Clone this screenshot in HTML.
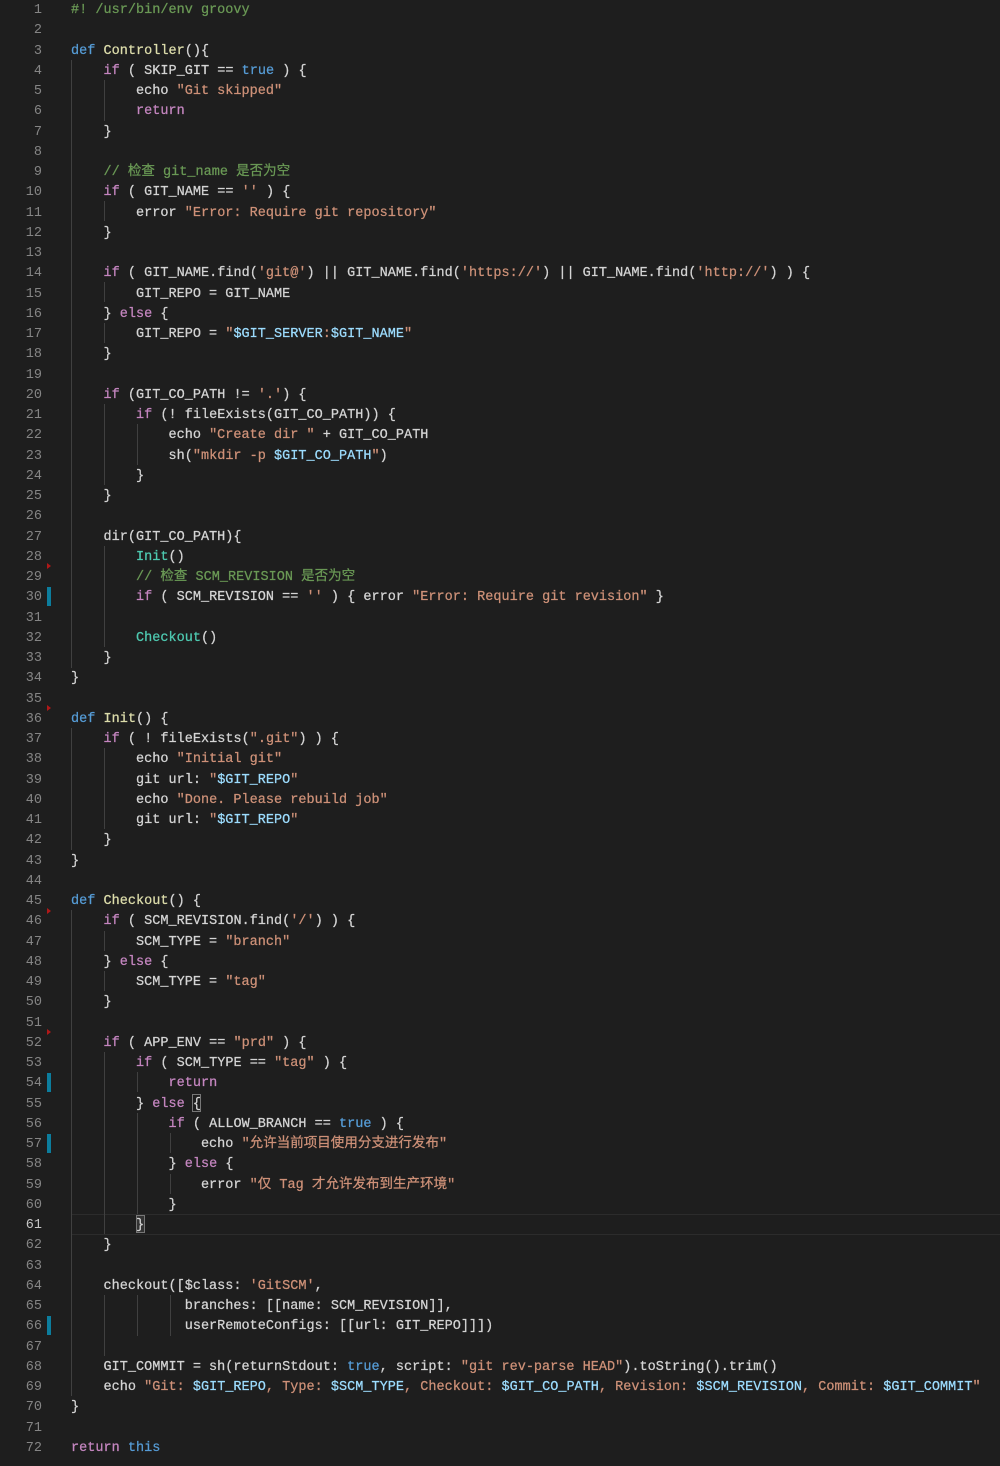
<!DOCTYPE html>
<html><head><meta charset="utf-8"><style>
body{margin:0;background:#1e1e1e;width:1000px;height:1466px;overflow:hidden;position:relative}
pre{margin:0;position:absolute;left:71px;top:1px;font:13.5px/20.25px "Liberation Mono","Noto Sans CJK SC",monospace;color:#d4d4d4;letter-spacing:0.02px;-webkit-text-stroke:0.25px}
#ln{position:absolute;left:0;top:1px;width:42px;text-align:right;font:13.5px/20.25px "Liberation Mono",monospace;color:#858585}
.k{color:#c586c0}.d{color:#569cd6}.s{color:#ce9178}.c{color:#6a9955}.f{color:#dcdcaa}.t{color:#4ec9b0}.v{color:#9cdcfe}
.g{position:absolute;width:1px;background:#404040}
.m{position:absolute;left:47px;width:4px;height:19px;background:#0c7d9d}
.r{position:absolute;left:47px;width:0;height:0;border-top:3px solid transparent;border-bottom:3px solid transparent;border-left:4px solid #b01818}
</style></head><body>
<div style="position:absolute;left:71px;right:0;top:1214px;height:19px;border-top:1px solid #2c2c2c;border-bottom:1px solid #2c2c2c"></div>
<div style="position:absolute;left:136px;top:1215px;width:9px;height:18px;border:1px solid #777;box-sizing:border-box;background:#333"></div>
<div style="position:absolute;left:192px;top:1094px;width:9px;height:18px;border:1px solid #777;box-sizing:border-box"></div>
<div class="g" style="left:71px;top:60px;height:608px"></div>
<div class="g" style="left:71px;top:728px;height:122px"></div>
<div class="g" style="left:71px;top:910px;height:486px"></div>
<div class="g" style="left:104px;top:80px;height:41px"></div>
<div class="g" style="left:104px;top:201px;height:20px"></div>
<div class="g" style="left:104px;top:282px;height:20px"></div>
<div class="g" style="left:104px;top:323px;height:20px"></div>
<div class="g" style="left:104px;top:404px;height:81px"></div>
<div class="g" style="left:104px;top:546px;height:101px"></div>
<div class="g" style="left:104px;top:748px;height:81px"></div>
<div class="g" style="left:104px;top:931px;height:20px"></div>
<div class="g" style="left:104px;top:971px;height:20px"></div>
<div class="g" style="left:104px;top:1052px;height:182px"></div>
<div class="g" style="left:104px;top:1295px;height:61px"></div>
<div class="g" style="left:137px;top:424px;height:41px"></div>
<div class="g" style="left:137px;top:1072px;height:20px"></div>
<div class="g" style="left:137px;top:1113px;height:101px"></div>
<div class="g" style="left:137px;top:1295px;height:41px"></div>
<div class="g" style="left:170px;top:1133px;height:20px"></div>
<div class="g" style="left:170px;top:1174px;height:20px"></div>
<div class="g" style="left:170px;top:1295px;height:41px"></div>
<div class="m" style="top:587px"></div><div class="m" style="top:1073px"></div><div class="m" style="top:1134px"></div><div class="m" style="top:1316px"></div>
<div class="r" style="top:563px"></div><div class="r" style="top:705px"></div><div class="r" style="top:908px"></div><div class="r" style="top:1029px"></div>
<div id="ln">1<br>2<br>3<br>4<br>5<br>6<br>7<br>8<br>9<br>10<br>11<br>12<br>13<br>14<br>15<br>16<br>17<br>18<br>19<br>20<br>21<br>22<br>23<br>24<br>25<br>26<br>27<br>28<br>29<br>30<br>31<br>32<br>33<br>34<br>35<br>36<br>37<br>38<br>39<br>40<br>41<br>42<br>43<br>44<br>45<br>46<br>47<br>48<br>49<br>50<br>51<br>52<br>53<br>54<br>55<br>56<br>57<br>58<br>59<br>60<br><span style="color:#c6c6c6">61</span><br>62<br>63<br>64<br>65<br>66<br>67<br>68<br>69<br>70<br>71<br>72</div>
<pre><span class="c">#! /usr/bin/env groovy</span>

<span class="d">def</span> <span class="f">Controller</span>(){
    <span class="k">if</span> ( SKIP_GIT == <span class="d">true</span> ) {
        echo <span class="s">"Git skipped"</span>
        <span class="k">return</span>
    }

    <span class="c">// 检查 git_name 是否为空</span>
    <span class="k">if</span> ( GIT_NAME == <span class="s">''</span> ) {
        error <span class="s">"Error: Require git repository"</span>
    }

    <span class="k">if</span> ( GIT_NAME.find(<span class="s">'git@'</span>) || GIT_NAME.find(<span class="s">'https://'</span>) || GIT_NAME.find(<span class="s">'http://'</span>) ) {
        GIT_REPO = GIT_NAME
    } <span class="k">else</span> {
        GIT_REPO = <span class="s">"</span><span class="v">$GIT_SERVER</span><span class="s">:</span><span class="v">$GIT_NAME</span><span class="s">"</span>
    }

    <span class="k">if</span> (GIT_CO_PATH != <span class="s">'.'</span>) {
        <span class="k">if</span> (! fileExists(GIT_CO_PATH)) {
            echo <span class="s">"Create dir "</span> + GIT_CO_PATH
            sh(<span class="s">"mkdir -p </span><span class="v">$GIT_CO_PATH</span><span class="s">"</span>)
        }
    }

    dir(GIT_CO_PATH){
        <span class="t">Init</span>()
        <span class="c">// 检查 SCM_REVISION 是否为空</span>
        <span class="k">if</span> ( SCM_REVISION == <span class="s">''</span> ) { error <span class="s">"Error: Require git revision"</span> }

        <span class="t">Checkout</span>()
    }
}

<span class="d">def</span> <span class="f">Init</span>() {
    <span class="k">if</span> ( ! fileExists(<span class="s">".git"</span>) ) {
        echo <span class="s">"Initial git"</span>
        git url: <span class="s">"</span><span class="v">$GIT_REPO</span><span class="s">"</span>
        echo <span class="s">"Done. Please rebuild job"</span>
        git url: <span class="s">"</span><span class="v">$GIT_REPO</span><span class="s">"</span>
    }
}

<span class="d">def</span> <span class="f">Checkout</span>() {
    <span class="k">if</span> ( SCM_REVISION.find(<span class="s">'/'</span>) ) {
        SCM_TYPE = <span class="s">"branch"</span>
    } <span class="k">else</span> {
        SCM_TYPE = <span class="s">"tag"</span>
    }

    <span class="k">if</span> ( APP_ENV == <span class="s">"prd"</span> ) {
        <span class="k">if</span> ( SCM_TYPE == <span class="s">"tag"</span> ) {
            <span class="k">return</span>
        } <span class="k">else</span> {
            <span class="k">if</span> ( ALLOW_BRANCH == <span class="d">true</span> ) {
                echo <span class="s">"允许当前项目使用分支进行发布"</span>
            } <span class="k">else</span> {
                error <span class="s">"仅 Tag 才允许发布到生产环境"</span>
            }
        }
    }

    checkout([$class: <span class="s">'GitSCM'</span>,
              branches: [[name: SCM_REVISION]],
              userRemoteConfigs: [[url: GIT_REPO]]])

    GIT_COMMIT = sh(returnStdout: <span class="d">true</span>, script: <span class="s">"git rev-parse HEAD"</span>).toString().trim()
    echo <span class="s">"Git: </span><span class="v">$GIT_REPO</span><span class="s">, Type: </span><span class="v">$SCM_TYPE</span><span class="s">, Checkout: </span><span class="v">$GIT_CO_PATH</span><span class="s">, Revision: </span><span class="v">$SCM_REVISION</span><span class="s">, Commit: </span><span class="v">$GIT_COMMIT</span><span class="s">"</span>
}

<span class="k">return</span> <span class="d">this</span></pre>
</body></html>
